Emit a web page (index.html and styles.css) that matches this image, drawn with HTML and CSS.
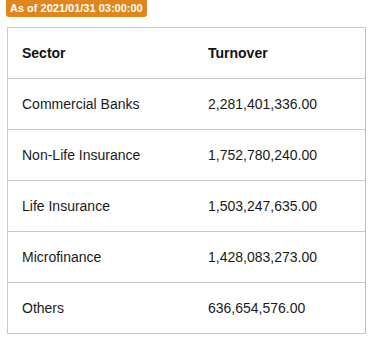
FILE: index.html
```html
<!DOCTYPE html>
<html>
<head>
<meta charset="utf-8">
<link rel="stylesheet" href="styles.css">
</head>
<body>
<div class="wrap">
  <div class="badge">As of 2021/01/31 03:00:00</div>
  <table class="tbl">
    <thead>
      <tr><th class="c1">Sector</th><th class="c2">Turnover</th></tr>
    </thead>
    <tbody>
      <tr><td class="c1">Commercial Banks</td><td class="c2">2,281,401,336.00</td></tr>
      <tr><td class="c1">Non-Life Insurance</td><td class="c2">1,752,780,240.00</td></tr>
      <tr><td class="c1">Life Insurance</td><td class="c2">1,503,247,635.00</td></tr>
      <tr><td class="c1">Microfinance</td><td class="c2">1,428,083,273.00</td></tr>
      <tr><td class="c1">Others</td><td class="c2">636,654,576.00</td></tr>
    </tbody>
  </table>
</div>
</body>
</html>
```
FILE: styles.css
```css
html, body {
  margin: 0;
  padding: 0;
  background: #ffffff;
}
.wrap {
  padding: 0 0 0 7px;
  font-family: "Liberation Sans", Arial, sans-serif;
}
.badge {
  display: block;
  width: fit-content;
  margin-left: -1px;
  height: 17px;
  line-height: 16px;
  padding: 0 4px;
  background: #e0861c;
  color: #ffffff;
  font-weight: bold;
  font-size: 11px;
  border-radius: 0 0 3px 3px;
}
.tbl {
  margin-top: 10px;
  width: 359px;
  border-collapse: collapse;
  border: 1px solid #c4cccc;
  border-right-color: #a9c9cd;
  font-size: 14px;
  color: #1a1a1a;
}
.tbl th, .tbl td {
  height: 50px;
  padding: 0;
  text-align: left;
  vertical-align: middle;
  border-bottom: 1px solid #c4cccc;
}
.tbl th {
  font-weight: bold;
  color: #111111;
}
.c1 {
  width: 186px;
  padding-left: 14px !important;
}
.c2 {
  padding-left: 0;
}
```
